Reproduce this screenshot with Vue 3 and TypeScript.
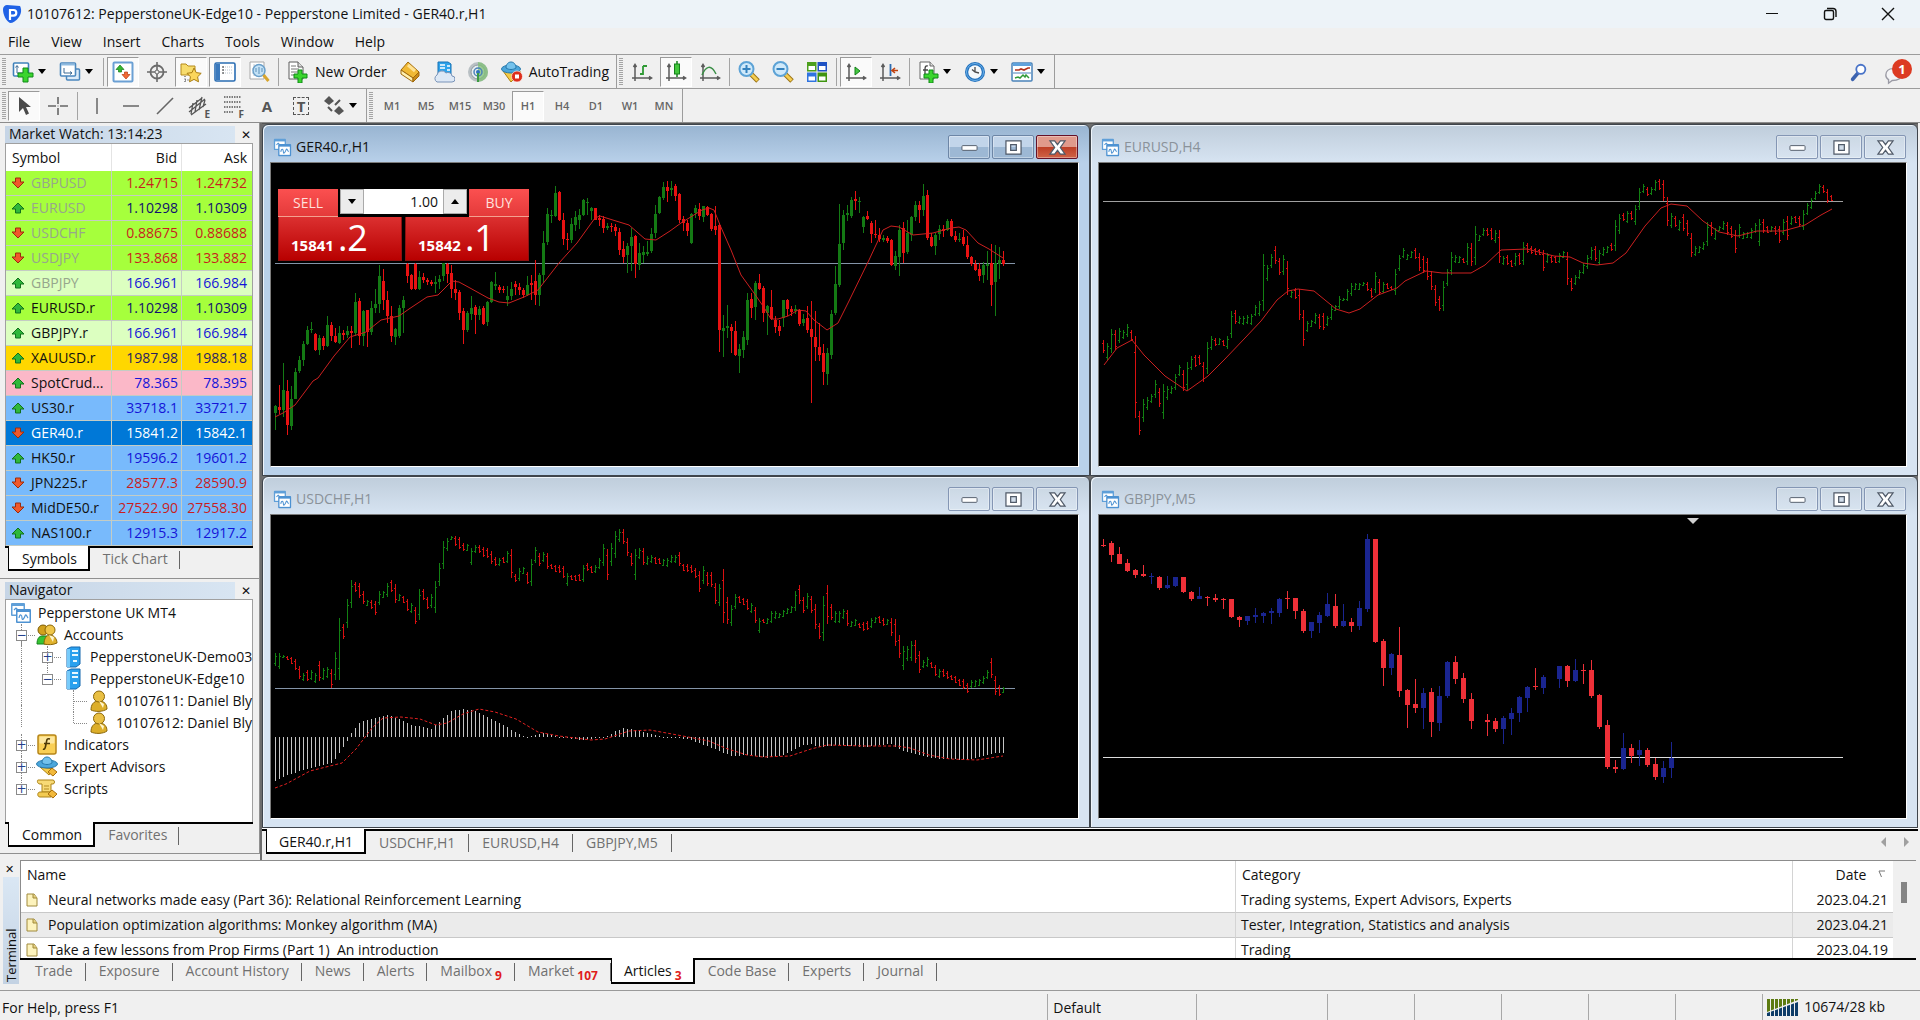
<script setup lang="ts">
import { ref } from 'vue'

type Point = [number, number]
type Candle = [number, number, number, number] | null

interface Tool {
  icon: string
  title: string
  label?: string
  drop?: boolean
  pressed?: boolean
  sep?: boolean
}

const icons: Record<string, string> = {
  chart: '<rect x="1" y="1" width="14" height="13" rx="1" fill="#5f9fd8"/><rect x="2.500" y="4" width="11" height="8.500" fill="#fff"/><rect x="6" y="7" width="15" height="14" rx="1" fill="#4d92d2"/><rect x="7.500" y="10" width="12" height="9.500" fill="#fff"/><path d="M4 8l2-2 2 2M9 16c1-5 3-3 3 0s2 1 3-2 2 1 3 2" fill="none" stroke="#4d92d2" stroke-width="1.200"/>',
  newchart: '<rect x="1.500" y="2" width="15" height="13" rx="1" fill="#fff" stroke="#3f82bb" stroke-width="1.600"/><path d="M5 5v7h8M3.500 6.500l1.500-2 1.500 2" fill="none" stroke="#3c6b94"/><path d="M11 8h5v5h5v4h-5v5h-5v-5H6v-4h5z" transform="translate(0 -1)" fill="#3bd52e" stroke="#118a18"/>',
  profiles: '<rect x="7.500" y="8" width="13" height="11" rx="1" fill="#dcebf8" stroke="#4b87bd" stroke-width="1.500"/><rect x="1.500" y="2" width="15" height="13" rx="1" fill="#fff" stroke="#4b87bd" stroke-width="1.600"/><path d="M2 3.500h14" stroke="#8fbbe0" stroke-width="2"/><path d="M5 7v5h8M11 10.500l2 1.500-2 1.500" fill="none" stroke="#3c6b94"/>',
  market: '<rect x="1.500" y="1.500" width="19" height="19" rx="1" fill="#fff" stroke="#6ba0d4" stroke-width="2"/><path d="M8 4l4 4.500H9.500V11h-3V8.500H4z" fill="#35b82e" stroke="#14781a" stroke-width=".7"/><path d="M14 18l-4-4.500h2.500V11h3v2.500H18z" fill="#f26a35" stroke="#b83a10" stroke-width=".7"/>',
  target: '<circle cx="11" cy="11" r="6.500" fill="none" stroke="#6b6b6b" stroke-width="1.800"/><path d="M11 1v20M1 11h20" stroke="#6b6b6b" stroke-width="1.600"/><circle cx="11" cy="11" r="2" fill="#eee" stroke="#6b6b6b"/>',
  navigator: '<path d="M1 3h5l2 2h7v9H1z" fill="#f7dc6d" stroke="#b58a1d"/><path d="M5 15v6M5 19h4" stroke="#333" stroke-dasharray="1 1.500"/><path d="M14 7l2.200 4.600 5 .7-3.600 3.500.9 5-4.500-2.400-4.500 2.400.9-5L7 12.300l5-.7z" fill="#fbd65c" stroke="#a97d12"/>',
  terminal: '<rect x="1" y="2" width="20" height="18" rx="1.500" fill="#fff" stroke="#2a6db3" stroke-width="1.600"/><rect x="2" y="3" width="4" height="16" fill="#3a79bd"/><path d="M9 6h10M9 9h10M9 12h10" stroke="#b8c4cf" stroke-dasharray="1 1"/><path d="M8 6h2M8 9h2M8 12h2" stroke="#333"/>',
  tester: '<path d="M2 1h14v17H2z" fill="#fff" stroke="#a8a8a8"/><path d="M4 8h11M4 12h11M6 3v12" stroke="#c3cad0"/><circle cx="11" cy="9.500" r="6" fill="#bfe0f6" fill-opacity=".9" stroke="#6a9fc9" stroke-width="1.500"/><path d="M8 11V7M11 13V6M14 11V7" stroke="#5d8fb7"/><path d="M15.500 14l5 6" stroke="#d8a52c" stroke-width="3"/>',
  order: '<path d="M2 1h9l5 5v12H2z" fill="#fff" stroke="#5c5c5c"/><path d="M11 1v5h5" fill="#ddd" stroke="#5c5c5c"/><path d="M4 5h5M4 8h8M4 11h8M4 14h5" stroke="#777"/><path d="M11 9h4v4h5v4h-5v5h-4v-5H7v-4h4z" fill="#3bd52e" stroke="#118a18"/>',
  meta: '<path d="M9 1l11 10-6 6L2 9z" fill="#f0b935" stroke="#a0690b"/><path d="M2 9l12 8v4L2 13z" fill="#fff0b0" stroke="#a0690b"/><path d="M14 17l6-6v4l-6 6z" fill="#c98b1a" stroke="#a0690b"/><path d="M9 4l7 6" stroke="#ffe394" stroke-width="3"/>',
  cloud: '<path d="M5 1h10l3 2v11H5z" fill="#2ea3ea" stroke="#1872b5"/><path d="M7 4h5M7 7h5M14 5h3M14 9h3" stroke="#fff" stroke-width="1.500"/><path d="M4 21a4 4 0 0 1 0-7 5 5 0 0 1 9-2 4 4 0 0 1 6 3 3 3 0 0 1 0 6z" fill="#dde8f5" stroke="#7893b8"/>',
  signal: '<circle cx="11" cy="11" r="10" fill="#b9c0c4"/><circle cx="11" cy="11" r="7" fill="#e9edef" stroke="#8d9ba2"/><path d="M11 1a10 10 0 0 1 0 20z" fill="#7fbf75" opacity=".75"/><circle cx="11" cy="11" r="4" fill="none" stroke="#4b83b9" stroke-width="1.500"/><circle cx="11" cy="11" r="2" fill="#2b6fc0"/><path d="M10 12h2v9h-2z" fill="#3c9a42"/>',
  auto: '<path d="M2 10l8 11 10-10z" fill="#f4cb48" stroke="#ae8011"/><ellipse cx="10" cy="8" rx="9.500" ry="4" fill="#4ba6db" stroke="#2678ab"/><path d="M5 7c0-8 10-8 10 0-3 2-7 2-10 0z" fill="#74c2ec" stroke="#2678ab"/><circle cx="16" cy="15.500" r="5.500" fill="#dd2f1c" stroke="#fff" stroke-width=".6"/><rect x="14" y="13.500" width="4" height="4" fill="#fff"/>',
  bars: '<path d="M4 20V4M1 17h19M2.500 6L4 3.500 5.500 6M18 15.500l2.500 1.500-2.500 1.500" fill="none" stroke="#5b5b5b" stroke-width="1.500"/><path d="M12 14V5M12 13H9M12 5h4" fill="none" stroke="#2f9a35" stroke-width="1.800"/>',
  candles: '<path d="M4 20V4M1 17h19M2.500 6L4 3.500 5.500 6M18 15.500l2.500 1.500-2.500 1.500" fill="none" stroke="#5b5b5b" stroke-width="1.500"/><path d="M12 0v16" stroke="#14801b" stroke-width="1.500"/><rect x="9.500" y="3" width="5" height="10" fill="#43c83c" stroke="#14801b"/>',
  line: '<path d="M4 20V4M1 17h19M2.500 6L4 3.500 5.500 6M18 15.500l2.500 1.500-2.500 1.500" fill="none" stroke="#5b5b5b" stroke-width="1.500"/><path d="M3 14c4-9 9-11 14-1" fill="none" stroke="#3b8f47" stroke-width="1.500"/>',
  zoomin: '<path d="M13 13l7 7" stroke="#9b7414" stroke-width="5"/><path d="M13 13l6.500 6.500" stroke="#f5cd50" stroke-width="3"/><circle cx="8.500" cy="8" r="7" fill="#cfe9fa" stroke="#5da3d6" stroke-width="2"/><path d="M4.500 8h8M8.500 4v8" stroke="#3482be" stroke-width="2"/>',
  zoomout: '<path d="M13 13l7 7" stroke="#9b7414" stroke-width="5"/><path d="M13 13l6.500 6.500" stroke="#f5cd50" stroke-width="3"/><circle cx="8.500" cy="8" r="7" fill="#cfe9fa" stroke="#5da3d6" stroke-width="2"/><path d="M4.500 8h8" stroke="#3482be" stroke-width="2"/>',
  tile: '<rect x="1" y="1" width="9.500" height="9.500" fill="#4c9f1c"/><rect x="11.500" y="1" width="9.500" height="9.500" fill="#1f52c4"/><rect x="1" y="11.500" width="9.500" height="9.500" fill="#2f73e0"/><rect x="11.500" y="11.500" width="9.500" height="9.500" fill="#3f9410"/><path d="M2.500 5h6.500v4H2.500zM13 5h6.500v4H13zM2.500 15.500h6.500v4H2.500zM13 15.500h6.500v4H13z" fill="#fff"/>',
  scroll: '<path d="M4 20V4M1 17h19M2.500 6L4 3.500 5.500 6M18 15.500l2.500 1.500-2.500 1.500" fill="none" stroke="#5b5b5b" stroke-width="1.500"/><path d="M10 6l5 4-5 4z" fill="#45c840" stroke="#14801b"/>',
  shift: '<path d="M4 20V4M1 17h19M2.500 6L4 3.500 5.500 6M18 15.500l2.500 1.500-2.500 1.500" fill="none" stroke="#5b5b5b" stroke-width="1.500"/><path d="M11.500 3v12" stroke="#2d6bb0" stroke-width="1.800"/><path d="M19 9.500h-5M16 7l-3 2.500 3 2.500" fill="none" stroke="#c1420f" stroke-width="1.600"/>',
  indicators: '<path d="M3 1h10l4 4v13H3z" fill="#fff" stroke="#686868"/><path d="M13 1v4h4" fill="#ddd" stroke="#686868"/><path d="M11 5c-3-1-3 2-3 4v5M6 9h5" fill="none" stroke="#444" stroke-width="1.300"/><path d="M12 9h4v4h5v4h-5v5h-4v-5H7v-4h5z" fill="#3bd52e" stroke="#118a18"/>',
  clock: '<circle cx="11" cy="11" r="10" fill="#2271bd"/><circle cx="11" cy="11" r="8.500" fill="none" stroke="#6cb2ea"/><circle cx="11" cy="11" r="6.800" fill="#f4f8fb"/><path d="M11 6v5l4 1M11 11L8 8.500" fill="none" stroke="#4b4b4b" stroke-width="1.300"/>',
  template: '<rect x="1" y="2" width="20" height="18" rx="1" fill="#fff" stroke="#4a83b9" stroke-width="1.500"/><path d="M2 3.500h18" stroke="#5fa2dc" stroke-width="3"/><path d="M2 12h18" stroke="#4a83b9"/><path d="M4 9l4 0 2-1 3 1 4-2h2" fill="none" stroke="#b2301b" stroke-width="1.700"/><path d="M4 17l3-1 2 1 3-3 2 2 1-2 3 3" fill="none" stroke="#2f9a35" stroke-width="1.500"/>',
  cursor: '<path d="M6 2v15l4-4 3 7 3-1.500-3-6.500h5z" fill="#4a4a4a"/>',
  cross: '<path d="M11 2v7M11 13v7M1 11h8M13 11h8" stroke="#666" stroke-width="1.600"/><rect x="10.500" y="10.500" width="1" height="1" fill="#666"/>',
  vline: '<path d="M11 3v16" stroke="#666" stroke-width="1.500"/>',
  hline: '<path d="M3 11h16" stroke="#666" stroke-width="1.500"/>',
  trend: '<path d="M3 19L19 3" stroke="#666" stroke-width="1.600"/>',
  channel: '<path d="M1 13L14 3M1 17L17 4M3 20L18 9M5 8l-2 11M9 5L7 17M14 2l-3 13M17 5l-2 7" stroke="#555" stroke-width="1.300"/>',
  fibo: '<path d="M2 2h17M2 7h17M2 12h17M2 17h10" stroke="#555" stroke-width="1.500" stroke-dasharray="1.500 1"/>',
  arrows: '<path d="M6 1l5 5-5 4-5-4z" fill="#555"/><path d="M16 11l5 5-5 4-5-4z" fill="#555"/><path d="M12 10l5-5M5 12l4 4" stroke="#555" stroke-width="2"/>',
  accounts: '<path d="M1 20c0-5 2-8 5-8h5v8z" fill="#36c433" stroke="#15821c"/><circle cx="7" cy="6" r="5" fill="#d1a11d" stroke="#7e5c05"/><path d="M8 20c0-5 2-9 6-9s7 4 7 8c-4 2-9 2-13 1z" fill="#e0b22c" stroke="#8a6608"/><circle cx="14" cy="6" r="5" fill="#efc64a" stroke="#8a6608"/><path d="M13 11l4 7 1-5z" fill="#fff6cf"/>',
  server: '<path d="M5 3l4-2h9v17l-4 3H5z" fill="#2aa0ee" stroke="#1768ae"/><path d="M5 3h3v18H5z" fill="#77cbfb"/><path d="M10 5h6M10 9h6M11 15h4" stroke="#e8f7ff" stroke-width="1.800"/>',
  user: '<path d="M3 20c0-5 2-9 8-9s8 4 8 8c-4 3-12 3-16 1z" fill="#dcae2a" stroke="#8a6608"/><circle cx="11" cy="6.500" r="5.500" fill="#e9bf43" stroke="#8a6608"/><path d="M11 11l4 7 1-4z" fill="#fff6cf"/>',
  indicator: '<rect x="2" y="1" width="18" height="19" rx="2" fill="#f9cf55" stroke="#b6861a" stroke-width="1.500"/><rect x="3.500" y="2.500" width="15" height="7" rx="1" fill="#fde79f"/><path d="M14 5c-4-1-3 2-4 5-.5 3-1 6-3 5M8 9.500h6" fill="none" stroke="#4d3906" stroke-width="1.600"/>',
  expert: '<path d="M4 11l9 8 4-6z" fill="#f4cb48" stroke="#ae8011"/><ellipse cx="11" cy="8" rx="10.500" ry="4" fill="#4ba6db" stroke="#2678ab"/><path d="M6 7c0-8 10-8 10 0-3 2-7 2-10 0z" fill="#74c2ec" stroke="#2678ab"/><path d="M16 12l5 4-4 4-5-4z" fill="#f2b93b" stroke="#a96f0d"/>',
  script: '<path d="M2 2h15c2 0 2 4 0 4h-2v8H6V6H4C1 6 1 2 2 2z" fill="#f8da75" stroke="#ac8319"/><path d="M4 14h11v5H4c-3 0-3-5 0-5z" fill="#f3cb52" stroke="#ac8319"/><path d="M8 8h5M8 11h5" stroke="#b38b23"/><path d="M16 12l5 4-4 4-5-4z" fill="#f2b93b" stroke="#a96f0d"/>',
}

const menus = ['File', 'View', 'Insert', 'Charts', 'Tools', 'Window', 'Help']

const standardTools: Tool[] = [
  { icon: 'newchart', title: 'New chart', drop: true },
  { icon: 'profiles', title: 'Profiles', drop: true, sep: true },
  { icon: 'market', title: 'Market Watch', pressed: true },
  { icon: 'target', title: 'Data window' },
  { icon: 'navigator', title: 'Navigator', pressed: true },
  { icon: 'terminal', title: 'Terminal', pressed: true },
  { icon: 'tester', title: 'Strategy tester', sep: true },
  { icon: 'order', title: 'New order', label: 'New Order' },
  { icon: 'meta', title: 'MetaEditor' },
  { icon: 'cloud', title: 'Virtual hosting' },
  { icon: 'signal', title: 'Signals' },
  { icon: 'auto', title: 'AutoTrading', label: 'AutoTrading' },
]
const chartTools: Tool[] = [
  { icon: 'bars', title: 'Bar chart' },
  { icon: 'candles', title: 'Candlesticks', pressed: true },
  { icon: 'line', title: 'Line chart', sep: true },
  { icon: 'zoomin', title: 'Zoom in' },
  { icon: 'zoomout', title: 'Zoom out' },
  { icon: 'tile', title: 'Tile windows', sep: true },
  { icon: 'scroll', title: 'Auto scroll', pressed: true },
  { icon: 'shift', title: 'Chart shift', sep: true },
  { icon: 'indicators', title: 'Indicators', drop: true },
  { icon: 'clock', title: 'Periods', drop: true },
  { icon: 'template', title: 'Templates', drop: true },
]
const lineTools: Tool[] = [
  { icon: 'cursor', title: 'Cursor', pressed: true },
  { icon: 'cross', title: 'Crosshair', sep: true },
  { icon: 'vline', title: 'Vertical line' },
  { icon: 'hline', title: 'Horizontal line' },
  { icon: 'trend', title: 'Trendline' },
  { icon: 'channel', title: 'Equidistant channel' },
  { icon: 'fibo', title: 'Fibonacci retracement' },
  { icon: 'text', title: 'Text' },
  { icon: 'textlabel', title: 'Text label' },
  { icon: 'arrows', title: 'Arrows', drop: true },
]
const iconLetters: Record<string, string> = { channel: 'E', fibo: 'F', text: 'A', textlabel: 'T' }
const frames = ['M1', 'M5', 'M15', 'M30', 'H1', 'H4', 'D1', 'W1', 'MN']

const quotes = [
  { s: 'GBPUSD', bid: '1.24715', ask: '1.24732', up: false, bg: 'lime', dim: true },
  { s: 'EURUSD', bid: '1.10298', ask: '1.10309', up: true, bg: 'lime', dim: true },
  { s: 'USDCHF', bid: '0.88675', ask: '0.88688', up: false, bg: 'lime', dim: true },
  { s: 'USDJPY', bid: '133.868', ask: '133.882', up: false, bg: 'lime', dim: true },
  { s: 'GBPJPY', bid: '166.961', ask: '166.984', up: true, bg: 'mint', dim: true },
  { s: 'EURUSD.r', bid: '1.10298', ask: '1.10309', up: true, bg: 'lime' },
  { s: 'GBPJPY.r', bid: '166.961', ask: '166.984', up: true, bg: 'mint' },
  { s: 'XAUUSD.r', bid: '1987.98', ask: '1988.18', up: true, bg: 'gold' },
  { s: 'SpotCrud...', bid: '78.365', ask: '78.395', up: true, bg: 'pink' },
  { s: 'US30.r', bid: '33718.1', ask: '33721.7', up: true, bg: 'sky' },
  { s: 'GER40.r', bid: '15841.2', ask: '15842.1', up: false, bg: 'picked' },
  { s: 'HK50.r', bid: '19596.2', ask: '19601.2', up: true, bg: 'sky' },
  { s: 'JPN225.r', bid: '28577.3', ask: '28590.9', up: false, bg: 'sky' },
  { s: 'MidDE50.r', bid: '27522.90', ask: '27558.30', up: false, bg: 'sky' },
  { s: 'NAS100.r', bid: '12915.3', ask: '12917.2', up: true, bg: 'sky' },
]

const tree = [
  { text: 'Pepperstone UK MT4', icon: 'chart', guides: [], box: '' },
  { text: 'Accounts', icon: 'accounts', guides: ['tee'], box: '−' },
  { text: 'PepperstoneUK-Demo03', icon: 'server', guides: ['bar', 'tee'], box: '+' },
  { text: 'PepperstoneUK-Edge10', icon: 'server', guides: ['bar', 'end'], box: '−' },
  { text: '10107611: Daniel Bly', icon: 'user', guides: ['bar', 'none', 'tee'], box: '' },
  { text: '10107612: Daniel Bly', icon: 'user', guides: ['bar', 'none', 'end'], box: '' },
  { text: 'Indicators', icon: 'indicator', guides: ['tee'], box: '+' },
  { text: 'Expert Advisors', icon: 'expert', guides: ['tee'], box: '+' },
  { text: 'Scripts', icon: 'script', guides: ['end'], box: '+' },
]

const articles = [
  { name: 'Neural networks made easy (Part 36): Relational Reinforcement Learning', cat: 'Trading systems, Expert Advisors, Experts', date: '2023.04.21' },
  { name: 'Population optimization algorithms: Monkey algorithm (MA)', cat: 'Tester, Integration, Statistics and analysis', date: '2023.04.21' },
  { name: 'Take a few lessons from Prop Firms (Part 1)\u00a0 An introduction', cat: 'Trading', date: '2023.04.19' },
]
const terminalTabs = [
  { t: 'Trade' }, { t: 'Exposure' }, { t: 'Account History' }, { t: 'News' }, { t: 'Alerts' },
  { t: 'Mailbox', n: '9' }, { t: 'Market', n: '107' }, { t: 'Articles', n: '3' },
  { t: 'Code Base' }, { t: 'Experts' }, { t: 'Journal' },
]
const chartTabs = ['GER40.r,H1', 'USDCHF,H1', 'EURUSD,H4', 'GBPJPY,M5']
const volume = ref('1.00')

/* Candles are [high, open, close, low], measured downwards in thirds of a pixel. */
const ger: Candle[] = [
  [855,880,860,932],[797,862,872,882],[730,870,812,893],[780,815,915,945],[800,918,837,932],[745,837,756,838],[710,755,722,760],[665,722,672,738],[618,672,630,675],[608,632,628,640],
  [640,642,690,693],[645,690,655,707],[648,655,680,690],[590,680,617,682],[606,617,650,663],[625,650,668,670],[618,670,640,672],[630,641,645,660],[620,645,634,655],[618,633,640,685],
  [520,640,546,650],[535,543,648,675],[570,648,573,680],[570,572,638,682],[545,638,565,645],[508,565,552,580],[435,552,470,580],[448,484,540,572],[515,540,590,610],[560,588,650,668],
  [625,652,628,675],[555,650,565,655],[530,565,542,640],[430,432,470,490],[462,465,508,510],[430,432,508,510],[455,508,472,510],[460,473,480,490],[475,480,488,495],[482,486,494,500],
  [470,492,488,520],[465,488,478,508],[430,470,430,485],[430,432,462,490],[435,460,508,535],[480,508,520,540],[510,518,580,600],[565,573,632,672],[575,630,580,638],[530,582,565,600],
  [555,562,585,642],[560,585,568,600],[560,565,612,615],[545,608,548,618],[485,548,486,550],[458,500,492,512],[495,502,512,520],[500,508,512,520],[500,540,528,560],[488,530,508,540],
  [485,492,502,525],[490,502,512,525],[505,512,525,535],[470,525,495,528],[465,490,495,540],[420,483,525,555],[460,525,465,558],[335,465,370,490],[265,368,282,375],[270,290,286,310],
  [200,290,220,292],[215,217,302,305],[280,302,358,375],[340,358,362,392],[295,360,313,370],[275,315,292,335],[268,300,285,328],[237,287,240,290],[235,250,246,285],[263,275,265,300],
  [264,266,300,302],[285,295,300,320],[290,298,325,340],[310,325,318,330],[310,318,322,338],[312,322,335,348],[325,338,390,405],[365,388,412,430],[370,405,378,460],[325,378,352,455],
  [345,350,433,475],[370,435,400,450],[380,405,398,430],[365,402,398,408],[325,393,343,400],[255,340,282,355],[230,280,233,283],[188,235,202,240],[183,202,214,248],[185,212,205,228],
  [193,200,228,245],[220,223,300,310],[288,298,310,335],[300,310,333,350],[280,370,282,372],[255,280,265,295],[250,268,290,300],[258,292,260,308],[258,262,285,290],[280,283,328,335],
  [260,320,330,345],[310,317,632,697],[585,633,625,712],[555,625,618,655],[612,622,633,700],[605,635,706,708],[672,708,687,760],[633,690,652,715],[520,660,540,675],[520,538,565,595],
  [485,563,490,600],[463,490,508,512],[500,505,580,608],[555,580,558,645],[510,563,598,600],[590,600,622,640],[600,618,635,648],[540,595,542,622],[538,542,568,590],[558,568,578,590],
  [555,575,568,582],[568,570,613,618],[582,610,598,618],[558,595,630,640],[545,628,653,850],[575,652,682,725],[610,682,705,725],[672,700,758,795],[685,762,700,795],[570,705,583,718],
  [440,580,492,585],[252,495,373,503],[272,370,285,390],[255,285,280,305],[232,290,240,295],[215,237,245,270],[233,248,244,280],[290,322,293,340],[275,290,298,302],[305,310,342,370],
  [300,342,346,355],[325,346,358,368],[345,360,355,368],[348,355,365,370],[358,362,435,440],[395,438,408,450],[315,412,330,470],[308,325,400,430],[300,398,340,402],[290,345,293,365],
  [245,292,255,305],[243,257,272,310],[192,270,228,290],[212,225,355,362],[340,352,380,382],[340,380,345,405],[315,343,328,360],[317,328,335,352],[297,330,303,335],[298,303,348,352],
  [335,348,362,368],[340,362,358,368],[330,352,373,378],[350,375,412,418],[408,413,432,440],[420,432,450,455],[430,447,470,485],[428,465,435,490],[395,440,433,480],[372,430,495,558],
  [375,488,430,590],[383,433,420,478],[393,420,432,440],
]
const gerMa: Point[] = [[4,254],[12,250],[24,242],[42,218],[47,215],[63,193],[79,174],[95,169],[110,157],[128,153],[138,146],[156,134],[167,132],[181,118],[188,119],[199,125],[217,135],[228,139],[238,140],[253,134],[267,127],[274,118],[288,100],[306,80],[324,55],[329,53],[345,58],[358,62],[374,76],[385,77],[399,68],[410,60],[431,47],[438,45],[443,47],[449,62],[460,87],[470,112],[483,130],[492,143],[500,156],[507,156],[517,153],[527,147],[535,148],[543,157],[556,167],[567,160],[578,138],[598,97],[612,67],[620,63],[628,64],[642,72],[662,70],[680,65],[688,64],[695,67],[707,80],[718,86],[732,95]]

const gbp: Candle[] = [
  [210,228,231,233],[215,222,258,278],[232,255,285,285],[270,282,305,308],[300,303,318,327],[288,315,320,323],[312,323,320,345],[320,322,357,362],[320,356,348,358],[322,350,323,352],
  [322,323,368,370],[365,367,390,395],[352,388,381,390],[380,382,387,410],[373,386,392,398],[385,388,393,420],[388,390,443,446],[440,442,453,473],[440,454,441,468],[415,443,438,462],
  [428,440,432,460],[415,431,426,464],[385,432,390,443],[366,385,388,418],[385,387,426,448],[420,425,486,490],[458,486,459,506],[428,462,438,490],[372,440,405,442],[375,411,470,477],
  [405,470,456,472],[445,457,471,489],[395,471,417,483],[195,420,210,428],[209,210,518,520],[510,514,597,650],[552,597,555,618],[474,558,665,684],[660,663,707,776],[630,705,717,732],
  [655,716,670,780],[655,669,759,803],[650,762,681,785],[575,681,579,687],[561,579,630,645],[612,627,690,702],[670,690,756,780],null,[733,753,758,800],[745,756,780,788],
  [740,780,747,824],[717,748,730,797],[680,732,682,757],[650,687,652,728],[597,651,654,663],[618,657,624,675],null,[590,630,591,655],[588,591,636,653],[570,636,603,638],
  [585,602,605,645],[573,603,681,687],[675,678,774,780],[753,768,894,900],[872,894,900,912],[790,900,837,902],[825,837,861,880],[812,858,843,890],[835,843,888,893],[866,884,924,933],
  [876,924,897,942],[818,897,866,926],
]

/* Bars are high-low pairs with the direction: g for a rise, r for a fall. */
const eur = '662-700r 670-720g 628-700g 632-692r 625-670g 630-658g 612-652g 630-665r 650-895r 875-945r 838-908g 832-872g 822-850g 780-835g 805-862r 792-897g 798-842g 800-822g 762-812g 735-770g 752-815r 728-812g 710-750g 707-742r 705-735r 728-788r 668-762g 650-690g 655-678r 655-675g 660-680r 648-688g 575-655g 570-612r 590-612g 590-615g 585-612g 582-615g 555-588g 545-590g 402-575g 435-485g 402-445g 380-432r 415-465r 407-465g 425-525r 510-535g 505-537r 508-602r 570-678r 605-638g 600-622g 580-612g 582-628r 580-632r 590-620g 560-600g 555-575g 530-568g 535-545g 508-545g 490-530g 490-510g 490-510g 488-500g 488-515r 505-535r 458-520g 478-525r 488-520g 490-508r 500-512r 447-527g 405-455g 384-415g 402-420g 395-415g 384-418r 400-455r 408-460r 415-480r 455-510r 495-560r 530-575r 485-575g 448-500g 397-465g 405-430g 408-430g 415-430r 370-437g 370-440r 320-437g 345-365g 325-348g 325-350r 325-362r 330-370g 330-430r 410-435g 405-435r 420-442r 400-440g 400-435r 368-437g 370-400r 378-402r 385-405r 388-405r 390-455r 400-430g 405-430r 410-430r 400-430g 395-415g 397-495r 475-515r 465-497g 450-478g 430-462g 405-448g 382-420g 380-425r 392-435g 382-410g 378-400g 370-395r 300-395g 282-342g 280-305r 275-310g 275-302r 255-315g 205-272g 192-220g 202-228r 202-225g 182-215g 178-210r 182-245r 232-320r 280-325g 290-322r 300-335g 283-335r 300-350r 340-412r 380-410g 378-400g 368-390g 308-378g 308-350r 325-360g 318-335g 305-330g 308-345r 320-355r 330-400r 313-355g 338-358g 338-355g 325-358g 310-340g 298-378g 298-340r 320-340r 320-338g 320-345r 320-370r 298-345g 290-362r 290-315g 288-310r 288-318r 272-332g 250-285g 235-268g 215-240g 192-222g 195-220r 208-250r 225-245r'
const eurMa: Point[] = [[5,202],[18,185],[33,177],[45,192],[66,213],[88,228],[109,213],[125,197],[146,175],[162,158],[178,137],[189,128],[199,126],[215,128],[226,137],[237,146],[250,150],[261,146],[279,132],[298,125],[306,118],[327,108],[343,110],[372,110],[386,102],[402,87],[428,86],[455,93],[471,94],[484,100],[498,102],[514,100],[527,90],[546,63],[562,45],[572,41],[588,43],[604,58],[620,69],[639,73],[658,68],[684,68],[706,62],[722,52],[733,46]]

const chf = '552-590g 552-598g 558-565g 560-572r 562-585r 570-602r 590-630r 612-635g 602-635r 602-632g 610-642g 575-635r 595-632g 592-625g 600-657r 548-632g 445-632g 465-508r 390-475g 332-415g 338-368r 340-385r 365-405r 392-410g 392-418r 395-438r 365-408g 365-385g 342-382g 332-368r 345-400r 375-395g 380-402r 388-425r 402-430g 412-463r 360-452g 360-392r 382-420r 375-415g 335-430g 280-350g 215-298g 205-245g 200-212g 200-230r 202-240r 222-245r 225-245g 235-288g 228-250g 228-250r 232-262r 235-265r 245-285r 262-290r 265-290g 262-280r 245-280g 240-325r 315-338r 295-335g 292-315g 308-345r 270-350g 232-280g 252-290r 248-278g 252-298r 285-298r 288-308r 288-312r 290-325r 310-350g 318-332r 318-335r 315-335r 288-338g 280-305r 290-312r 288-312g 265-300g 225-290g 240-332r 222-290g 185-265g 180-218g 178-225r 205-260r 250-290r 238-332g 235-270g 235-288r 260-288g 258-282g 262-285r 265-285r 270-290g 265-292g 258-282g 258-280g 248-290r 285-305r 285-308r 288-312r 295-325r 305-368r 290-345g 308-350r 308-352r 340-405r 345-410g 298-462r 382-465r 408-470g 375-420g 380-400r 385-408r 390-422r 400-432g 412-460r 445-490g 450-462r 445-465g 425-460g 425-450g 430-445g 422-442g 415-435g 410-430g 365-425g 348-405r 382-430r 370-420g 380-430r 405-478r 460-510r 380-515g 348-465r 405-452r 425-462g 425-462g 420-450g 422-470r 455-472g 450-470g 460-475r 458-485r 455-482r 445-475g 442-462g 440-462r 445-470r 450-468g 445-500r 450-530r 498-565r 530-602g 530-575g 515-575g 512-582r 545-612r 572-595g 562-592g 578-595r 588-620r 600-625g 600-622r 605-628r 618-632r 620-640r 628-650r 630-660r 640-672r 632-655g 632-652g 628-650g 620-645g 602-630g 565-625r 620-678r 648-680r 652-672g'
const macd: Point[] = [[3,267],[15,260],[37,254],[61,248],[77,225],[80,218],[88,208],[98,204],[115,200],[129,204],[141,210],[160,214],[171,204],[180,196],[192,194],[204,196],[229,208],[245,218],[256,222],[272,218],[288,222],[310,225],[337,221],[344,216],[353,213],[369,216],[390,222],[417,224],[444,234],[460,241],[478,240],[495,243],[511,241],[529,231],[540,229],[548,232],[567,230],[594,232],[620,229],[631,236],[658,243],[695,245],[722,238],[734,238]]
const macdSignal: Point[] = [[4,273],[15,269],[39,256],[71,248],[85,234],[101,213],[112,203],[130,202],[149,204],[165,210],[176,208],[192,199],[208,194],[224,197],[245,204],[267,217],[288,221],[320,225],[334,224],[358,216],[379,215],[401,219],[417,222],[438,226],[454,233],[476,240],[492,242],[519,241],[540,234],[556,230],[594,231],[626,231],[639,233],[658,240],[679,244],[706,245],[732,241]]

interface Shapes { upWick: string; downWick: string; upBody: string; downBody: string }

function candleShapes(data: Candle[], base: number, step: number, half: number): Shapes {
  const out: Shapes = { upWick: '', downWick: '', upBody: '', downBody: '' }
  const y = (v: number) => Math.round((v - base) / 3)
  data.forEach((c, i) => {
    if (!c) return
    const x = 4 + i * step
    const rise = c[2] < c[1]
    const top = y(Math.min(c[1], c[2]))
    const height = Math.max(1, y(Math.max(c[1], c[2])) - top)
    const wick = `M${x + 0.5} ${y(c[0])}V${y(c[3])}`
    const body = `M${x - half} ${top}h${half * 2 + 1}v${height}h-${half * 2 + 1}z`
    if (rise) { out.upWick += wick; out.upBody += body } else { out.downWick += wick; out.downBody += body }
  })
  return out
}

function barShapes(data: string, base: number): Shapes {
  const out: Shapes = { upWick: '', downWick: '', upBody: '', downBody: '' }
  data.split(' ').forEach((item, i) => {
    const [hi, lo] = item.slice(0, -1).split('-').map((v) => Math.round((Number(v) - base) / 3))
    const rise = item.endsWith('g')
    const inset = Math.round((lo - hi) * 0.2)
    const open = (rise ? lo - inset : hi + inset) + 0.5
    const close = (rise ? hi + inset : lo - inset) + 0.5
    const x = 4 + i * 4
    const path = `M${x + 0.5} ${hi}V${lo}M${x - 1} ${open}h1M${x + 1} ${close}h1`
    if (rise) out.upWick += path
    else out.downWick += path
  })
  return out
}

function curve(points: Point[]): string {
  return points.map(([x, y]) => `${x},${y}`).join(' ')
}

function histogram(points: Point[], zero: number): string {
  let path = ''
  let k = 0
  for (let x = 4; x <= 732; x += 4) {
    while (points[k + 1][0] < x) k++
    const [x0, y0] = points[k]
    const [x1, y1] = points[k + 1]
    const y = Math.round(y0 + ((y1 - y0) * (x - x0)) / (x1 - x0))
    path += `M${x + 0.5} ${zero}V${y === zero ? y + 1 : y}`
  }
  return path
}

const charts = [
  { title: 'GER40.r,H1', active: true, shapes: candleShapes(ger, 130, 4, 1), ma: curve(gerMa), price: 100, priceColor: '#8494a8', up: '#147a14', down: '#e81212' },
  { title: 'EURUSD,H4', active: false, shapes: barShapes(eur, 130), ma: curve(eurMa), price: 38, priceColor: '#a0a0a0', up: '#128012', down: '#d81010' },
  { title: 'USDCHF,H1', active: false, shapes: barShapes(chf, 137), ma: '', price: 173, priceColor: '#8494a8', up: '#128012', down: '#d81010', histogram: histogram(macd, 222), signal: curve(macdSignal) },
  { title: 'GBPJPY,M5', active: false, shapes: candleShapes(gbp, 137, 8, 2), ma: '', price: 242, priceColor: '#dcdcdc', up: '#1a2590', down: '#ee3038', marker: true },
]
const toolRows = [[standardTools, chartTools], [lineTools]]
</script>

<template>
  <div class="app">
    <header class="titlebar">
      <svg class="logo" viewBox="0 0 20 20" aria-hidden="true">
        <path d="M5 1l13 1c2 4 1 8-1 11-3 4-6 6-9 6C4 17 1 11 1 5c0-2 2-4 4-4z" fill="#1f62e6" />
        <path d="M8 16V6h3.500a2.800 2.800 0 0 1 0 5.600H8" fill="none" stroke="#fff" stroke-width="2.200" />
      </svg>
      <h1>10107612: PepperstoneUK-Edge10 - Pepperstone Limited - GER40.r,H1</h1>
      <div class="caption">
        <button aria-label="Minimize"><svg viewBox="0 0 14 14"><path d="M1 6.500h12" stroke="#111" /></svg></button>
        <button aria-label="Restore"><svg viewBox="0 0 14 14"><rect x="1.500" y="3.500" width="9" height="9" rx="1.500" fill="none" stroke="#111" stroke-width="1.400" /><path d="M4 1.500h6a3 3 0 0 1 3 3V10" fill="none" stroke="#111" stroke-width="1.400" /></svg></button>
        <button aria-label="Close"><svg viewBox="0 0 14 14"><path d="M1 1l12 12M13 1L1 13" stroke="#111" stroke-width="1.400" /></svg></button>
      </div>
    </header>

    <nav class="menu">
      <button v-for="m in menus" :key="m">{{ m }}</button>
    </nav>

    <div v-for="(row, r) in toolRows" :key="r" class="toolrow">
      <div v-for="(group, g) in row" :key="g" class="toolbar">
        <span class="grip"></span>
        <template v-for="t in group" :key="t.title">
          <button class="tool" :class="{ pressed: t.pressed, drop: t.drop, labelled: t.label }" :aria-label="t.title">
            <span class="glyph">
              <svg v-if="icons[t.icon]" viewBox="0 0 22 22" v-html="icons[t.icon]"></svg>
              <span v-if="iconLetters[t.icon]" class="letter" :class="t.icon">{{ iconLetters[t.icon] }}</span>
            </span>
            <span v-if="t.label">{{ t.label }}</span>
            <i v-if="t.drop" class="caret"></i>
          </button>
          <span v-if="t.sep" class="sep"></span>
        </template>
      </div>
      <div v-if="r === 1" class="toolbar">
        <span class="grip"></span>
        <button v-for="f in frames" :key="f" class="tool frame" :class="{ pressed: f === 'H1' }">{{ f }}</button>
      </div>
      <div v-if="r === 0" class="corner">
        <button aria-label="Search">
          <svg viewBox="0 0 22 22"><path d="M10 12l-6 7" stroke="#3c62ae" stroke-width="4" stroke-linecap="round" /><circle cx="13" cy="8" r="5" fill="#fff" stroke="#4a74c8" stroke-width="2" /></svg>
        </button>
        <button class="chat" aria-label="Messages">
          <svg viewBox="0 0 22 22"><path d="M10 4c-5 0-8 3-8 7 0 3 1 4 3 5v4l4-3c7 0 10-2 10-6s-4-7-9-7z" fill="#f4f4f6" stroke="#9a9aa4" stroke-width="1.500" /></svg>
          <b>1</b>
        </button>
      </div>
    </div>

    <main class="work">
      <aside class="side">
        <section class="panel">
          <div class="head"><h2>Market Watch: 13:14:23</h2><button aria-label="Close Market Watch">✕</button></div>
          <table class="quotes">
            <thead><tr><th>Symbol</th><th>Bid</th><th>Ask</th></tr></thead>
            <tbody>
              <tr v-for="q in quotes" :key="q.s" :class="[q.bg, q.up ? 'rise' : 'fall', { dim: q.dim }]">
                <td>
                  <svg viewBox="0 0 14 12" aria-hidden="true">
                    <path v-if="q.up" d="M7 1l6 6h-3.500v4h-5V7H1z" fill="#2fb83a" stroke="#11701c" />
                    <path v-else d="M7 11l6-6H9.500V1h-5v4H1z" fill="#f0582b" stroke="#9c2c0c" />
                  </svg>{{ q.s }}
                </td>
                <td>{{ q.bid }}</td>
                <td>{{ q.ask }}</td>
              </tr>
            </tbody>
          </table>
          <div class="tabs"><button class="on">Symbols</button><button>Tick Chart</button></div>
        </section>

        <section class="panel grow">
          <div class="head"><h2>Navigator</h2><button aria-label="Close Navigator">✕</button></div>
          <ul class="tree">
            <li v-for="n in tree" :key="n.text">
              <span v-for="(g, i) in n.guides" :key="i" class="guide" :class="g">
                <i v-if="n.box && i === n.guides.length - 1">{{ n.box }}</i>
              </span>
              <span class="node"><svg viewBox="0 0 22 22" v-html="icons[n.icon]"></svg></span>
              <span class="name">{{ n.text }}</span>
            </li>
          </ul>
          <div class="tabs"><button class="on">Common</button><button>Favorites</button></div>
        </section>
      </aside>

      <section class="mdi">
        <div class="windows">
          <article v-for="c in charts" :key="c.title" class="win" :class="{ active: c.active }">
            <div class="bar">
              <svg class="wicon" viewBox="0 0 22 22" v-html="icons.chart"></svg>
              <h3>{{ c.title }}</h3>
              <button aria-label="Minimize chart"><svg viewBox="0 0 20 18"><rect x="2" y="7" width="16" height="5" rx="1" fill="#fff" stroke="#505a68" /></svg></button>
              <button aria-label="Maximize chart"><svg viewBox="0 0 20 18"><path d="M2 2h16v14H2zM7 6v6h6V6z" fill="#fff" fill-rule="evenodd" stroke="#505a68" stroke-width="1.300" /></svg></button>
              <button class="shut" aria-label="Close chart"><svg viewBox="0 0 20 18"><path d="M2 2h5l3 4 3-4h5l-5 7 5 7h-5l-3-4-3 4H2l5-7z" fill="#fff" stroke="#505a68" stroke-width="1.300" /></svg></button>
            </div>
            <div class="canvas">
              <svg class="plot" role="img" :aria-label="c.title">
                <line x1="4" :y1="c.price + 0.5" x2="744" :y2="c.price + 0.5" :stroke="c.priceColor" shape-rendering="crispEdges" />
                <g shape-rendering="crispEdges">
                  <path :d="c.shapes.upWick" :stroke="c.up" />
                  <path :d="c.shapes.downWick" :stroke="c.down" />
                  <path :d="c.shapes.upBody" :fill="c.up" />
                  <path :d="c.shapes.downBody" :fill="c.down" />
                  <path v-if="c.histogram" :d="c.histogram" stroke="#c4c4c4" />
                </g>
                <polyline v-if="c.ma" :points="c.ma" fill="none" stroke="#cc2020" />
                <polyline v-if="c.signal" :points="c.signal" fill="none" stroke="#e02020" stroke-dasharray="3 2" />
                <path v-if="c.marker" d="M588 3h12l-6 6z" fill="#d0d0d0" />
              </svg>
              <div v-if="c.active" class="trade">
                <button class="side-label">SELL</button>
                <div class="volume">
                  <button aria-label="Less"><i class="caret"></i></button>
                  <input v-model="volume" aria-label="Volume" />
                  <button aria-label="More"><i class="caret flip"></i></button>
                </div>
                <button class="side-label">BUY</button>
                <button class="quote">15841<em>.2</em></button>
                <button class="quote">15842<em>.1</em></button>
              </div>
            </div>
          </article>
        </div>
        <div class="tabs wide">
          <button v-for="(t, i) in chartTabs" :key="t" :class="{ on: i === 0 }">{{ t }}</button>
          <span class="arrows"><i class="left"></i><i class="right"></i></span>
        </div>
      </section>
    </main>

    <section class="terminal">
      <div class="strip"><button aria-label="Close terminal">✕</button><h2>Terminal</h2></div>
      <div class="tbody">
        <div class="list">
          <table class="articles">
            <thead><tr><th>Name</th><th>Category</th><th>Date <svg viewBox="0 0 8 8"><path d="M7 1H1l2.500 6" fill="none" stroke="#777" /></svg></th></tr></thead>
            <tbody>
              <tr v-for="a in articles" :key="a.name">
                <td>
                  <svg viewBox="0 0 12 14" aria-hidden="true"><path d="M1 1h7l3 4v8H1z" fill="#fdf3bd" stroke="#a08a3c" /><path d="M7 1v4h4" fill="#e5cf7c" stroke="#a08a3c" /></svg>{{ a.name }}
                </td>
                <td>{{ a.cat }}</td>
                <td>{{ a.date }}</td>
              </tr>
            </tbody>
          </table>
          <div class="scroll"><span></span></div>
        </div>
        <div class="tabs term">
          <button v-for="t in terminalTabs" :key="t.t" :class="{ on: t.t === 'Articles' }">{{ t.t }}<b v-if="t.n">{{ t.n }}</b></button>
        </div>
      </div>
    </section>

    <footer class="status">
      <span class="help">For Help, press F1</span>
      <span class="c1">Default</span><span class="c2"></span><span class="c3"></span><span class="c3"></span><span class="c3"></span><span class="c3"></span><span class="c3"></span>
      <span class="net">
        <svg viewBox="0 0 32 17" aria-hidden="true">
          <path d="M0 0h31v1L0 13z" fill="#5c7a10" /><path d="M0 17v-3L31 3v14z" fill="#0e3c68" />
          <path d="M3.500 0v17M7.500 0v17M11.500 0v17M15.500 0v17M19.500 0v17M23.500 0v17M27.500 0v17" stroke="#f0f0f0" />
        </svg>10674/28 kb
      </span>
    </footer>
  </div>
</template>

<style>
body { margin: 0; }
</style>

<style scoped>
.app {
  display: flex;
  flex-direction: column;
  min-height: 100vh;
  background: #f0f0f0;
  color: #111;
  font: 14px/20px "Open Sans", "Noto Sans", sans-serif;
  overflow: hidden;
}
.app *, .app *::before, .app *::after { box-sizing: border-box; }
button { font: inherit; color: inherit; background: none; border: 0; padding: 0; margin: 0; }
h1, h2, h3 { font: inherit; margin: 0; white-space: nowrap; }
ul { list-style: none; margin: 0; padding: 0; }
table { border-collapse: separate; border-spacing: 0; table-layout: fixed; }
th { font-weight: 400; text-align: left; }

.titlebar { display: flex; align-items: center; height: 28px; padding-left: 2px; background: #edf3f8; }
.logo { width: 20px; height: 20px; margin-right: 5px; }
.caption { display: flex; margin-left: auto; padding-right: 3px; }
.caption button { width: 58px; height: 28px; display: grid; place-items: center; }
.caption svg { width: 14px; height: 14px; }

.menu { display: flex; gap: 21px; height: 26px; align-items: center; padding: 2px 0 0 8px; }

.toolrow { display: flex; height: 34px; border-top: 1px solid #9c9c9c; }
.toolbar { display: flex; align-items: center; gap: 2px; padding: 0 2px; border-right: 1px solid #9c9c9c; }
.grip { width: 4px; height: 28px; background: repeating-linear-gradient(#a4a4a4 0 1px, #f0f0f0 1px 2px); }
.toolbar + .toolbar .grip { margin-right: 1px; }
.tool { position: relative; display: flex; align-items: center; justify-content: center; width: 32px; height: 30px; border: 1px solid transparent; }
.tool.pressed { background: #fafafa; border-color: #9a9a9a #fff #fff #9a9a9a; }
.tool.drop { width: 45px; justify-content: flex-start; padding-left: 3px; }
.tool.labelled { width: auto; padding: 0 4px; gap: 6px; white-space: nowrap; }
.tool .caret { margin-left: 4px; }
.tool.frame { font-size: 11px; font-weight: 600; color: #666; }
.glyph { position: relative; display: grid; place-items: center; width: 22px; height: 22px; color: #555; }
.glyph svg { width: 22px; height: 22px; }
.letter { font-weight: 700; font-size: 15px; line-height: 16px; }
.letter.channel, .letter.fibo { position: absolute; right: 0; bottom: -2px; font-size: 10px; line-height: 10px; }
.letter.textlabel { width: 16px; text-align: center; border: 1px dashed #555; }
.sep { width: 1px; height: 28px; margin: 0 1px; background: #a4a4a4; }
.caret { width: 0; height: 0; border: 4px solid transparent; border-top: 5px solid #000; border-bottom: 0; }
.caret.flip { border-top: 0; border-bottom: 5px solid #000; }
.corner { display: flex; gap: 7px; align-items: center; margin-left: auto; padding-right: 8px; }
.corner svg { width: 20px; height: 20px; display: block; }
.chat { position: relative; padding: 6px 8px 0 8px; }
.chat b { position: absolute; right: 0; top: 0; width: 20px; height: 20px; border-radius: 50%; background: #dc3a22; color: #fff; font-size: 13px; line-height: 20px; text-align: center; }

.work { display: flex; flex: 1; border-top: 1px solid #8c8c8c; min-width: 0; }
.side { flex: none; width: 260px; display: flex; flex-direction: column; }
.panel { display: flex; flex-direction: column; padding: 3px 6px 7px 5px; border-right: 1px solid #909090; border-bottom: 1px solid #909090; }
.panel.grow { flex: 1; margin-bottom: 6px; padding-bottom: 6px; }
.head { display: flex; height: 17px; line-height: 16px; margin-right: -3px; }
.head h2 { flex: none; width: 230px; padding-left: 4px; background: linear-gradient(90deg, #c6d5e6, #d8e5f2); }
.head button { flex: 1; font-size: 12px; }
.quotes { width: 100%; background: #fff; border: 1px solid #a0a0a0; border-bottom: 0; }
.quotes th { height: 27px; padding: 0 6px; border-right: 1px solid #e4e4e4; }
.quotes th:first-child { width: 106px; }
.quotes th:last-child { border-right: 0; padding-right: 5px; }
.quotes th:nth-child(2) { padding-right: 4px; }
.quotes th + th, .quotes td + td { text-align: right; }
.quotes td { height: 25px; padding: 0 3px; border-right: 1px solid #c4ccc4; border-bottom: 1px solid #c4ccc4; white-space: nowrap; }
.quotes td:last-child { padding-right: 5px; border-right: 0; }
.quotes td:first-child { padding-left: 5px; }
.quotes td svg { width: 14px; height: 12px; margin-right: 6px; vertical-align: -1px; }
.rise td + td { color: #1414d8; }
.fall td + td { color: #c81e1e; }
.dim td:first-child { color: #96a68c; }
.lime td { background: #a6ff3c; }
.lime.rise td + td { color: #10106e; }
.mint td { background: #dcffc0; }
.gold td { background: #ffd700; }
.gold td + td { color: #2a1e60; }
.pink td { background: #fbb8c8; }
.sky td { background: #78bafc; }
.picked td, .picked.fall td + td { background: #0078d7; color: #fff; }

.tabs { display: flex; height: 25px; padding-left: 3px; border-top: 2px solid #000; line-height: 20px; }
.tabs button { position: relative; padding: 0 12px 1px 13px; color: #707070; white-space: nowrap; }
.tabs button:not(.on)::after { content: ""; position: absolute; right: 0; top: 3px; height: 18px; border-right: 1px solid #666; }
.tabs .on { margin-top: -2px; background: #fff; color: #111; border: 1px solid #000; border-width: 0 2px 2px 1px; padding: 3px 11px 0 13px; }

.tree { flex: 1; background: #fff; border: 1px solid #a0a0a0; border-bottom: 0; padding: 2px 0 0 2px; }
.tree li { display: flex; align-items: center; height: 22px; white-space: nowrap; }
.guide { position: relative; flex: none; width: 26px; height: 22px; display: grid; place-items: center; }
.tree .guide::before { content: ""; position: absolute; left: 13px; top: 0; height: 22px; border-left: 1px dotted #888; }
.tree .guide.end::before { height: 11px; }
.tree .guide.none::before { display: none; }
.tree .guide.tee::after, .tree .guide.end::after { content: ""; position: absolute; left: 14px; top: 11px; width: 13px; border-top: 1px dotted #888; }
.guide i { position: relative; z-index: 1; width: 11px; height: 11px; border: 1px solid #8a8a8a; background: #fff; font: 12px/8px "DejaVu Sans", sans-serif; color: #24408c; text-align: center; }
.node { flex: none; width: 30px; padding-left: 2px; height: 22px; }
.node svg { width: 22px; height: 22px; display: block; }

.mdi { flex: 1; min-width: 0; display: flex; flex-direction: column; border-left: 2px solid #6c6c6c; padding-right: 2px; }
.windows { flex: 1; display: grid; grid-template-columns: 1fr 1fr; grid-template-rows: 1fr 1fr; border-top: 1px solid #555; background: #6e6e6e; border-bottom: 1px solid #fff; }
.win { display: flex; flex-direction: column; min-width: 0; border: 1px solid #3f454c; border-radius: 6px 6px 0 0; padding: 0 10px 8px 7px; background: linear-gradient(#bfcddb 0, #d7e4f2 38px); box-shadow: inset 1px 1px #eef4fa; }
.win.active { background: linear-gradient(#98b4d1 0, #b9d1ea 38px); }
.bar { display: flex; align-items: center; gap: 2px; height: 37px; padding: 10px 1px 3px 3px; color: #8a929a; }
.win.active .bar { color: #111; }
.bar h3 { flex: 1; padding-left: 2px; }
.wicon { width: 19px; height: 19px; }
.bar button { display: grid; place-items: center; width: 42px; height: 24px; border: 1px solid #8496b4; border-radius: 2px; background: rgba(255, 255, 255, 0.1); box-shadow: inset 0 0 0 1px rgba(255, 255, 255, 0.35); }
.bar button svg { width: 19px; height: 17px; }
.active .bar button { background: linear-gradient(#c2d5ea 0 50%, #9db8d4 50%); border-color: #6d86a6; }
.active .bar .shut { background: linear-gradient(#e09a8c 0 50%, #bd3e26 50%, #cf6347); border-color: #651128; }
.canvas { position: relative; flex: 1; display: flex; background: #000; border: 1px solid #7c7c7c; border-right-color: #fff; border-bottom-color: #fff; }
.plot { flex: 1; width: 100%; min-height: 300px; }

.trade { position: absolute; left: 7px; top: 26px; width: 251px; display: grid; grid-template-columns: 60px 64px 3px 64px 60px; grid-template-rows: 28px 44px; color: #fff; }
.side-label { background: linear-gradient(#fb5050, #e43a3a); color: #ffe0dc; border-bottom: 1px solid #f4a090; line-height: 24px; }
.side-label:first-child { grid-column: 1; }
.side-label:nth-child(3) { grid-column: 5; }
.volume { grid-column: 2 / 5; display: flex; height: 25px; padding: 0 2px; }
.volume button { width: 24px; display: grid; place-items: center; background: #ececec; border: 1px solid #aaa; }
.volume input { flex: 1; min-width: 0; border: 0; padding: 0 5px; text-align: right; font: inherit; background: #fff; color: #111; border-radius: 0; }
.quote { display: flex; align-items: baseline; gap: 4px; padding-left: 12px; background: linear-gradient(#dc3030, #b80000); font-weight: 700; font-size: 15px; line-height: 42px; border: 1px solid #8c1010; border-top: 0; }
.quote:nth-child(4) { grid-column: 1 / 3; grid-row: 2; }
.quote:nth-child(5) { grid-column: 4 / 6; grid-row: 2; }
.quote em { font-style: normal; font-weight: 400; font-size: 36px; }

.tabs.wide { height: 31px; padding: 0 9px 0 4px; }
.tabs.wide button { height: 24px; padding: 0 14px 1px 13px; }
.tabs.wide .on { height: 25px; padding: 2px 11px 0 12px; }
.arrows { display: flex; gap: 18px; margin: 6px 0 0 auto; }
.arrows i { width: 0; height: 0; border: 5px solid transparent; }
.arrows .left { border-right-color: #a0a0a0; }
.arrows .right { border-left-color: #a0a0a0; border-right: 0; }

.terminal { display: flex; height: 130px; padding: 0 4px 6px 3px; }
.strip { flex: none; width: 17px; display: flex; flex-direction: column; }
.strip button { height: 17px; width: 13px; font-size: 11px; line-height: 12px; }
.strip h2 { flex: 1; width: 16px; writing-mode: vertical-rl; transform: rotate(180deg); font-size: 13px; line-height: 16px; padding-top: 2px; background: linear-gradient(#c3d2e3, #dae7f4); }
.tbody { flex: 1; min-width: 0; display: flex; flex-direction: column; border-top: 1px solid #8c8c8c; }
.list { display: flex; height: 97px; overflow: hidden; border-left: 1px solid #8c8c8c; }
.articles { flex: 1; background: #fff; }
.articles th { height: 27px; padding: 0 6px; }
.articles th:nth-child(2) { width: 557px; }
.articles th:nth-child(3) { width: 101px; }
.articles th svg { width: 8px; height: 8px; margin: 0 4px 2px 8px; }
.articles td { height: 25px; padding: 0 5px; white-space: nowrap; border-bottom: 1px solid #c8c8c8; }
.articles td svg { width: 12px; height: 14px; margin-right: 10px; vertical-align: -2px; }
.articles td + td, .articles th + th { border-left: 1px solid #d4d4d4; }
.articles tr > :last-child { text-align: right; }
.articles th:last-child { padding-right: 3px; }
.articles tr:nth-child(2) td { background: #ebebeb; }
.scroll { width: 23px; background: #f0f0f0; padding: 21px 0 0 8px; }
.scroll span { display: block; width: 6px; height: 21px; background: #858585; }
.tabs.term { height: 26px; padding-left: 2px; }
.tabs.term button { padding: 0 13px 2px; height: 24px; }
.tabs.term .on { padding: 2px 11px 0 12px; height: 26px; }
.tabs b { display: inline-block; margin-left: 3px; font-size: 12px; line-height: 12px; color: #e01c1c; position: relative; top: 4px; }

.status { display: flex; align-items: stretch; height: 30px; padding: 3px 35px 0 2px; border-top: 1px solid #9a9a9a; }
.status span { line-height: 28px; border-left: 1px solid #a8a8a8; padding-left: 5px; }
.status .help { flex: 1; border: 0; padding: 0; }
.c1 { width: 149px; }
.c2 { width: 131px; }
.c3 { width: 87px; }
.status .net { display: flex; align-items: center; gap: 5px; padding-left: 4px; white-space: nowrap; }
.net svg { width: 32px; height: 17px; }
</style>
